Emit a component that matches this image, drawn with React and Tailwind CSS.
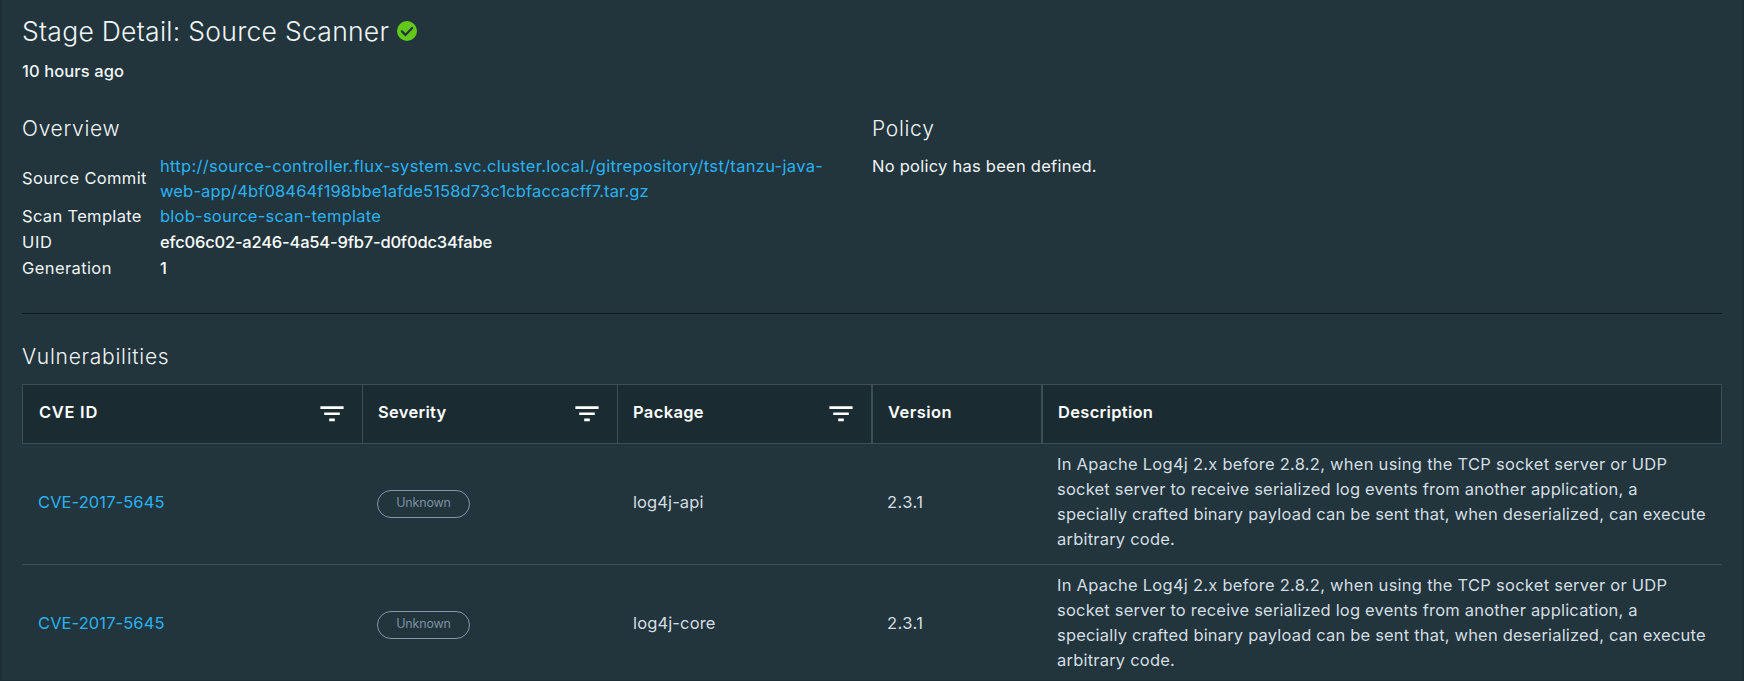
const vulnerabilities = [
  { cve: 'CVE-2017-5645', severity: 'Unknown', pkg: 'log4j-api', version: '2.3.1', pkgClass: 'tracking-[0.1px]' },
  { cve: 'CVE-2017-5645', severity: 'Unknown', pkg: 'log4j-core', version: '2.3.1', pkgClass: 'tracking-[0.14px]' },
];

function SuccessIcon() {
  return (
    <svg className="h-5 w-5 shrink-0" viewBox="0 0 20 20" aria-hidden="true">
      <circle cx="10" cy="10" r="10" fill="#62c819" />
      <path d="M4.9 10.4 8.4 13.9 15.2 7" fill="none" stroke="#22343c" strokeWidth="2.2" strokeLinecap="round" />
    </svg>
  );
}

function FilterIcon() {
  return (
    <svg className="h-4 w-6 shrink-0" viewBox="0 0 24 16" fill="#ffffff" aria-hidden="true">
      <path d="M0.4 0.3h23.2v2.6H0.4zM4.2 6.4h15.6v2.6H4.2zM9.2 12.6h5.6v2.6H9.2z" />
    </svg>
  );
}

function HeaderCell({ label, filter, className }) {
  return (
    <div className={`flex justify-between pt-[15px] pr-[18px] font-semibold text-white ${className}`}>
      <span>{label}</span>
      {filter && <span className="pt-1.5"><FilterIcon /></span>}
    </div>
  );
}

function VulnerabilityRow({ item }) {
  return (
    <div className="grid h-[121px] grid-cols-[340px_254px_255px_170px_681px] items-center border-b border-[#3b4f57] pt-2 pb-3 text-[#d3dee2]">
      <a className="pl-[16px] tracking-[0.08px] text-[#29b3f5]">{item.cve}</a>
      <div className="pt-[3px] pl-[15px]">
        <span className="flex h-7 w-[93px] justify-center rounded-[14px] border border-[#8497ab] text-[12.5px] leading-[23px] tracking-[-0.16px] text-[#7c8fa2]">
          {item.severity}
        </span>
      </div>
      <div className={`pl-[17px] ${item.pkgClass}`}>{item.pkg}</div>
      <div className="pl-[16px] tracking-[0.45px]">{item.version}</div>
      <div className="pl-[16px] whitespace-nowrap">
        <span className="block tracking-[0.26px]">In Apache Log4j 2.x before 2.8.2, when using the TCP socket server or UDP</span>
        <span className="block tracking-[0.2px]">socket server to receive serialized log events from another application, a</span>
        <span className="block tracking-[0.18px]">specially crafted binary payload can be sent that, when deserialized, can execute</span>
        <span className="block tracking-[0.21px]">arbitrary code.</span>
      </div>
    </div>
  );
}

export default function App() {
  return (
    <div className="h-[681px] w-[1744px] overflow-hidden border-x-2 border-b border-[#1e2e36] bg-[#22343c] px-5 pt-[13px] font-['Inter',sans-serif] text-[16.5px] leading-[25px] text-[#f1f5f6]">
      <header>
        <div className="flex items-start gap-[8px]">
          <h1 className="w-[367px] text-[26.5px] leading-9 font-light tracking-[0.27px] whitespace-nowrap">Stage Detail: Source Scanner</h1>
          <span className="pt-2"><SuccessIcon /></span>
        </div>
        <p className="mt-[10px] font-medium tracking-[0.09px]">10 hours ago</p>
      </header>

      <section className="mt-[33px] grid h-[196px] grid-cols-[850px_850px]">
        <div>
          <h2 className="text-[21px] leading-6 font-light tracking-[0.7px]">Overview</h2>
          <dl className="mt-[13px] grid grid-cols-[138px_700px] gap-y-px whitespace-nowrap">
            <dt className="flex h-[49px] items-center tracking-[0.36px]">Source Commit</dt>
            <dd className="h-[49px] text-[#29b3f5]">
              <span className="block tracking-[0.31px]">http://source-controller.flux-system.svc.cluster.local./gitrepository/tst/tanzu-java-</span>
              <span className="block tracking-[0.15px]">web-app/4bf08464f198bbe1afde5158d73c1cbfaccacff7.tar.gz</span>
            </dd>
            <dt className="tracking-[0.33px]">Scan Template</dt>
            <dd className="tracking-[0.24px] text-[#29b3f5]">blob-source-scan-template</dd>
            <dt className="tracking-[0.63px]">UID</dt>
            <dd className="font-medium tracking-[-0.19px] text-white">efc06c02-a246-4a54-9fb7-d0f0dc34fabe</dd>
            <dt className="tracking-[0.4px]">Generation</dt>
            <dd className="font-medium text-white">1</dd>
          </dl>
        </div>
        <div>
          <h2 className="text-[21px] leading-6 font-light tracking-[0.7px]">Policy</h2>
          <p className="mt-[13px] tracking-[0.25px]">No policy has been defined.</p>
        </div>
      </section>

      <section className="border-t border-[#0f171c] pt-[31px]">
        <h2 className="text-[21px] leading-6 font-light tracking-[0.72px]">Vulnerabilities</h2>
        <div className="mt-[15px] grid h-[60px] grid-cols-[340px_255px_255px_170px_680px] border border-[#3b4f57] bg-[#1b2b32]">
          <HeaderCell label="CVE ID" filter className="border-r border-[#3b4f57] pl-[16px] tracking-[0.7px]" />
          <HeaderCell label="Severity" filter className="border-r border-[#3b4f57] pl-[15px] tracking-[0.28px]" />
          <HeaderCell label="Package" filter className="border-r-2 border-[#3b4f57] pl-[15px] tracking-[0.35px]" />
          <HeaderCell label="Version" className="border-r-2 border-[#3b4f57] pl-[15px] tracking-[0.45px]" />
          <HeaderCell label="Description" className="pl-[15px] tracking-[0.3px]" />
        </div>
        {vulnerabilities.map((item) => (
          <VulnerabilityRow key={item.pkg} item={item} />
        ))}
      </section>
    </div>
  );
}
